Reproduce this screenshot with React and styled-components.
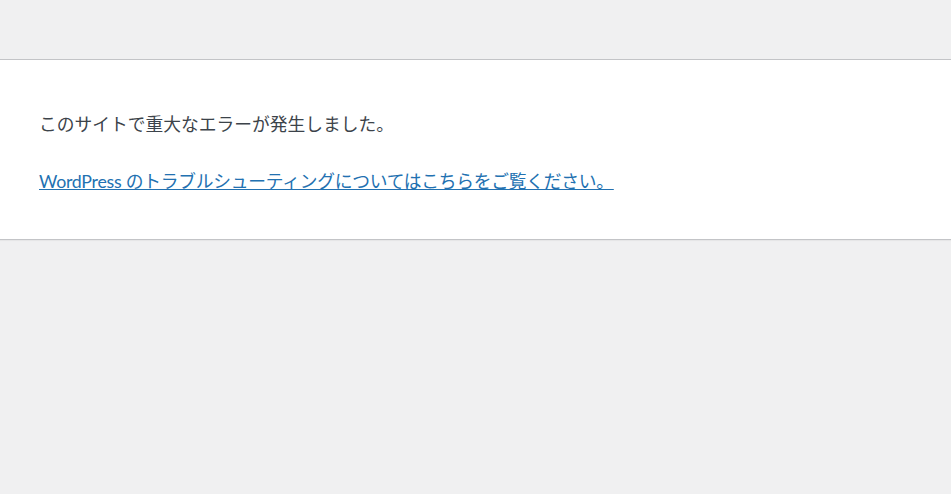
import React from 'react';
import styled, { createGlobalStyle } from 'styled-components';

const GlobalStyle = createGlobalStyle`
  html {
    background: #f0f0f1;
  }
  body {
    margin: 0;
    background: #f0f0f1;
  }
`;

const Page = styled.div`
  min-height: 494px;
  padding-top: 59px;
  box-sizing: border-box;
`;

const ErrorBox = styled.div`
  background: #fff;
  border-top: 1px solid #c3c4c7;
  border-bottom: 1px solid #c3c4c7;
  box-shadow: 0 1px 1px rgba(0, 0, 0, 0.04);
  padding: 51px 39px 44px;
  color: #3c434a;
  font-family: Lato, "Noto Sans CJK JP", sans-serif;
  font-size: 17.75px;
  line-height: 27px;
`;

const Message = styled.p`
  margin: 0;
  & + & {
    margin-top: 30px;
  }
`;

const HelpLink = styled.a`
  color: #2271b1;
  text-decoration: underline;
  letter-spacing: -0.25px;
`;

export default function App() {
  return (
    <>
      <GlobalStyle />
      <Page>
        <ErrorBox>
          <Message>このサイトで重大なエラーが発生しました。</Message>
          <Message>
            <HelpLink href="#">WordPress のトラブルシューティングについてはこちらをご覧ください。</HelpLink>
          </Message>
        </ErrorBox>
      </Page>
    </>
  );
}
